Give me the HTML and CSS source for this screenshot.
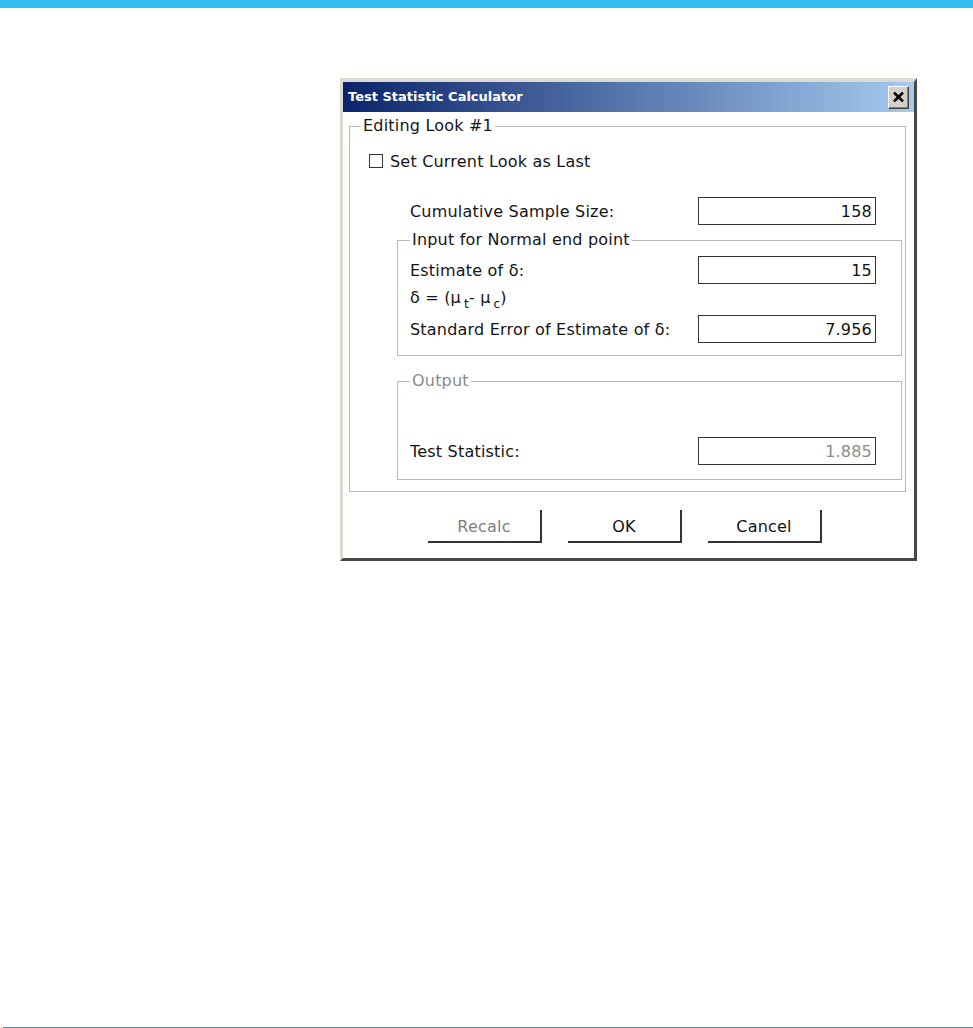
FILE: index.html
```html
<!DOCTYPE html>
<html lang="en">
<head>
<meta charset="utf-8">
<title>Test Statistic Calculator</title>
<link rel="stylesheet" href="styles.css">
</head>
<body>
<div class="topbar"></div>
<main class="stage">
  <div class="window">
    <div class="titlebar">
      <span class="title">Test Statistic Calculator</span>
      <button class="close" aria-label="Close">
        <svg width="11" height="10" viewBox="0 0 11 10"><path d="M1 0.5 L10 9.5 M10 0.5 L1 9.5" stroke="#000" stroke-width="2.6" fill="none"/></svg>
      </button>
    </div>
    <div class="body">
      <fieldset class="group outer">
        <legend>Editing Look #1</legend>
        <label class="check-row"><input type="checkbox" class="check"><span>Set Current Look as Last</span></label>
        <div class="row row-cum"><span>Cumulative Sample Size:</span><input class="field" value="158" readonly></div>
        <fieldset class="group inner">
          <legend>Input for Normal end point</legend>
          <div class="row r-est"><span>Estimate of δ:</span><input class="field" value="15" readonly></div>
          <div class="formula">δ = (μ<sub>t</sub>- μ<sub>c</sub>)</div>
          <div class="row r-se"><span>Standard Error of Estimate of δ:</span><input class="field" value="7.956" readonly></div>
        </fieldset>
        <fieldset class="group inner output">
          <legend class="muted">Output</legend>
          <div class="row r-ts"><span>Test Statistic:</span><input class="field off" value="1.885" readonly></div>
        </fieldset>
      </fieldset>
      <div class="buttons">
        <button class="btn off">Recalc</button>
        <button class="btn">OK</button>
        <button class="btn">Cancel</button>
      </div>
    </div>
  </div>
</main>
<div class="footer-line"></div>
</body>
</html>
```
FILE: styles.css
```css
html, body {
  height: 100%;
  margin: 0;
}
body {
  display: flex;
  flex-direction: column;
  font-family: "DejaVu Sans", Verdana, sans-serif;
  color: #141414;
  background: #fff;
}
.topbar {
  flex: none;
  height: 8px;
  background: #34bdf2;
}
.stage {
  flex: 1;
  padding: 70px 0 0 340px;
}
.window {
  width: 577px;
  box-sizing: border-box;
  border-style: solid;
  border-width: 4px 3px 3px 3px;
  border-color: #dcd9d3 #474747 #474747 #dcd9d3;
  background: #fff;
}
.titlebar {
  height: 30px;
  display: flex;
  align-items: center;
  justify-content: space-between;
  padding-left: 5px;
  background: linear-gradient(90deg, #0a246a 0%, #a6caf0 100%);
}
.title {
  color: #fff;
  font-weight: bold;
  font-size: 13px;
  line-height: 16px;
}
.close {
  width: 21px;
  height: 23px;
  margin: 0 5px 0 0;
  padding: 0;
  box-sizing: border-box;
  background: #d4d0c8;
  border: 1px solid;
  border-color: #fff #404040 #404040 #fff;
  box-shadow: inset -1px -1px #808080;
  display: flex;
  align-items: center;
  justify-content: center;
}
.body {
  padding: 0 8px 15px 6px;
  letter-spacing: 0.2px;
}
.group {
  margin: 0;
  min-width: 0;
  border: 1px solid #b8b8b8;
}
legend {
  padding: 0 2px;
  font-size: 16px;
  line-height: 18px;
  color: #141414;
}
legend.muted {
  color: #8a8a8a;
}
.outer {
  margin-top: 5px;
  padding: 0 3px 11px 11px;
}
.check-row {
  display: flex;
  align-items: center;
  gap: 7px;
  height: 20px;
  margin: 16px 0 0 8px;
  font-size: 16px;
}
.check {
  appearance: none;
  width: 14px;
  height: 14px;
  margin: 0;
  box-sizing: border-box;
  border: 1px solid #333;
  background: #fff;
}
.row {
  display: flex;
  align-items: center;
  justify-content: space-between;
  height: 28px;
  font-size: 16px;
}
.row-cum {
  margin: 26px 26px 0 49px;
}
.inner {
  margin: 6px 0 0 36px;
  padding: 0 25px 12px 12px;
}
.r-est {
  margin-top: 7px;
}
.formula {
  margin-top: 5px;
  height: 18px;
  line-height: 18px;
  font-size: 16px;
}
.formula sub {
  font-size: 12px;
  vertical-align: -5px;
  margin-left: 3px;
  line-height: 0;
}
.r-se {
  margin-top: 8px;
}
.output {
  margin-top: 16px;
  padding-bottom: 14px;
}
.r-ts {
  margin-top: 47px;
}
.field {
  width: 178px;
  height: 28px;
  box-sizing: border-box;
  margin: 0;
  border: 1px solid #333;
  padding: 0 3px;
  text-align: right;
  font: 16px "DejaVu Sans", Verdana, sans-serif;
  letter-spacing: 0.2px;
  color: #111;
  background: #fff;
  outline: none;
}
.field.off {
  color: #8c8c8c;
}
.buttons {
  display: flex;
  gap: 26px;
  margin-top: 18px;
  padding-left: 79px;
}
.btn {
  width: 114px;
  height: 33px;
  box-sizing: border-box;
  padding: 2px 0 0;
  background: #fff;
  border: 0;
  border-right: 2px solid #333;
  border-bottom: 2px solid #333;
  font: 16px "DejaVu Sans", Verdana, sans-serif;
  letter-spacing: 0.2px;
  color: #111;
}
.btn.off {
  color: #808080;
}
.footer-line {
  flex: none;
  height: 1px;
  margin-left: 3px;
  background: #2199d4;
}
```
